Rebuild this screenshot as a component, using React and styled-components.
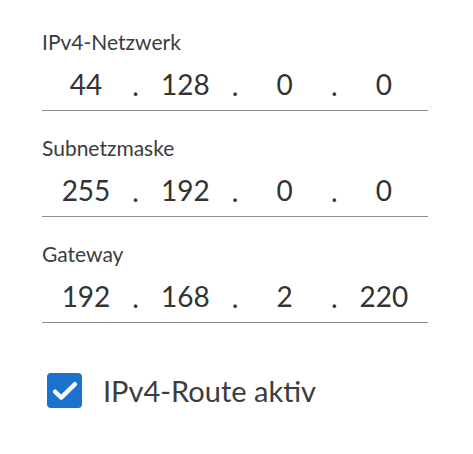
import React from 'react';
import styled, { createGlobalStyle } from 'styled-components';

const Global = createGlobalStyle`
  body {
    margin: 0;
    background: #fff;
    font-family: Lato, "Noto Sans", sans-serif;
    color: #3a3a3a;
  }
`;

const Page = styled.div`
  padding: 28px 45px 0 42px;
  width: 386px;
  display: flex;
  flex-direction: column;
`;

const Field = styled.div`
  display: flex;
  flex-direction: column;
  margin-bottom: 23px;
`;

const Label = styled.div`
  font-size: 21px;
  line-height: 28px;
  color: #3c3c3c;
`;

const AddressRow = styled.div`
  display: flex;
  align-items: flex-end;
  height: 44px;
  padding-bottom: 10px;
  border-bottom: 1px solid #8c8c8c;
`;

const Octet = styled.div`
  width: 88px;
  text-align: center;
  font-size: 28px;
  line-height: 32px;
  color: #333;
`;

const Dot = styled.div`
  flex: 1;
  text-align: center;
  font-size: 28px;
  line-height: 30px;
  color: #333;
`;

const CheckRow = styled.label`
  display: flex;
  align-items: center;
  gap: 21px;
  margin-top: 27px;
  padding-left: 5px;
  font-size: 29px;
  color: #3c3c3c;
`;

const Box = styled.span`
  width: 35px;
  height: 35px;
  border-radius: 4px;
  background: #1b72cc;
  display: flex;
  align-items: center;
  justify-content: center;
`;

const fields = [
  { label: 'IPv4-Netzwerk', value: ['44', '128', '0', '0'] },
  { label: 'Subnetzmaske', value: ['255', '192', '0', '0'] },
  { label: 'Gateway', value: ['192', '168', '2', '220'] },
];

export default function App() {
  return (
    <>
      <Global />
      <Page>
        {fields.map((f) => (
          <Field key={f.label}>
            <Label>{f.label}</Label>
            <AddressRow>
              {f.value.map((v, i) => (
                <React.Fragment key={i}>
                  {i > 0 && <Dot>.</Dot>}
                  <Octet>{v}</Octet>
                </React.Fragment>
              ))}
            </AddressRow>
          </Field>
        ))}
        <CheckRow>
          <Box>
            <svg width="30" height="30" viewBox="0 0 24 24">
              <path d="M4 12.5l5 4.8L20 6.5" fill="none" stroke="#fff" strokeWidth="3.4" strokeLinecap="round" strokeLinejoin="round" />
            </svg>
          </Box>
          IPv4-Route aktiv
        </CheckRow>
      </Page>
    </>
  );
}
